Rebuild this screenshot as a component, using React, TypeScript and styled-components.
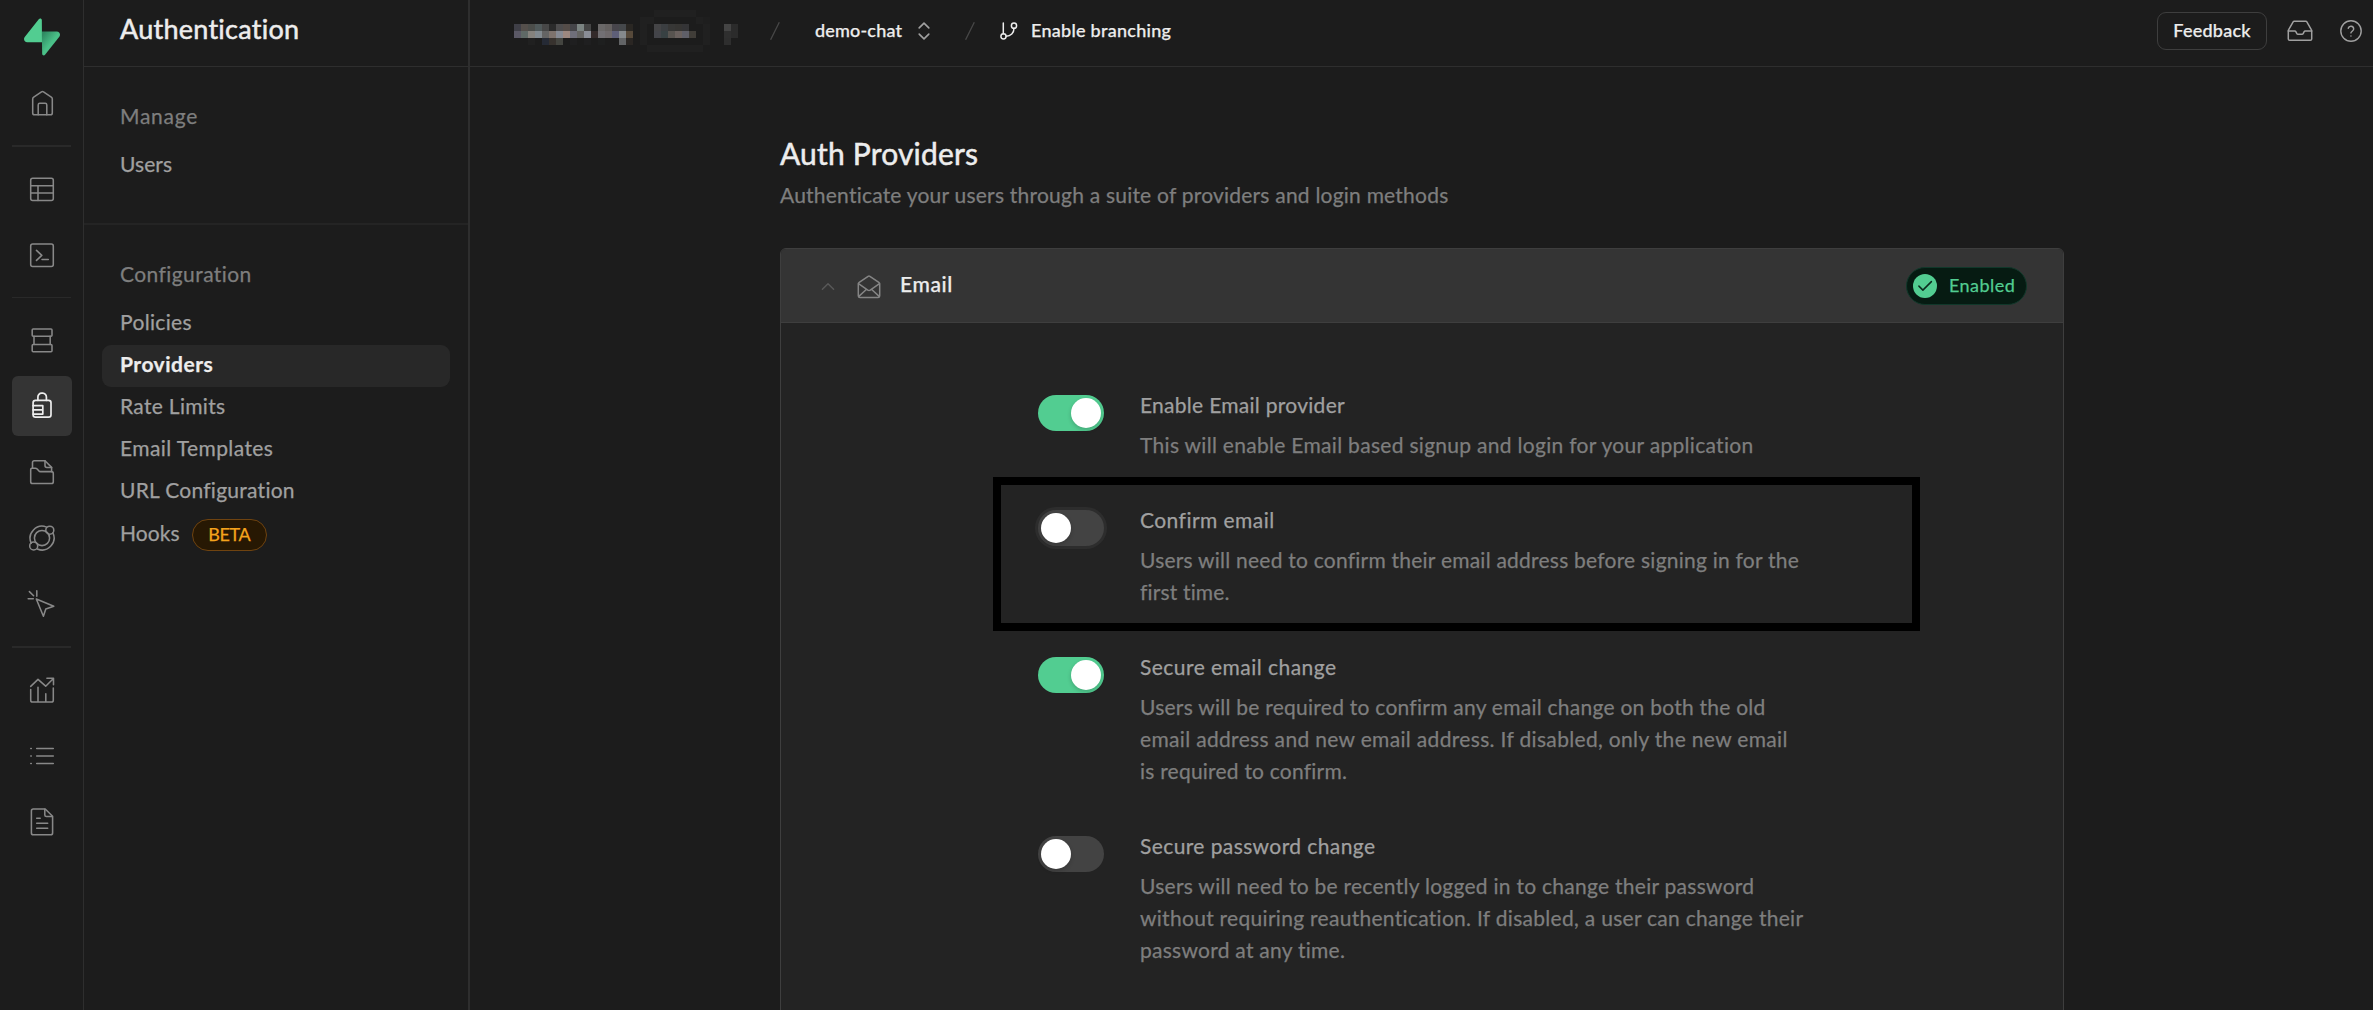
import React from 'react';
import styled, { createGlobalStyle } from 'styled-components';

const color = {
  bg: '#1c1c1c',
  surface: '#232323',
  header: '#343434',
  border: '#2e2e2e',
  borderStrong: '#3e3e3e',
  muted: '#242424',
  text: '#ededed',
  light: '#a0a0a0',
  lighter: '#7e7e7e',
  brand: '#52cd91',
};

const GlobalStyle = createGlobalStyle`
  *, *::before, *::after { box-sizing: border-box; }
  body {
    margin: 0;
    background: ${color.bg};
    color: ${color.text};
    font-family: Lato, "Open Sans", sans-serif;
    -webkit-text-stroke: 0.25px currentColor;
    overflow: hidden;
  }
  h1, h2, h3, p { margin: 0; font-weight: 400; }
  svg { display: block; flex: none; }
`;

const Shell = styled.div`
  display: grid;
  grid-template-columns: 84px 386px 1fr;
  height: 1010px;
`;

/* ---------- icon rail ---------- */

const Rail = styled.nav`
  display: flex;
  flex-direction: column;
  align-items: flex-start;
  gap: 6px;
  padding: 18px 11px 0 12px;
  border-right: 1px solid ${color.border};
`;

const LogoSlot = styled.div`
  padding: 0 0 11px 12px;
`;

const RailButton = styled.div<{ $active?: boolean }>`
  display: flex;
  align-items: center;
  justify-content: center;
  flex: none;
  width: 60px;
  height: 60px;
  border-radius: 6px;
  color: ${(p) => (p.$active ? color.text : '#888888')};
  background: ${(p) => (p.$active ? '#343434' : 'transparent')};
`;

const RailDivider = styled.div<{ $thin?: boolean }>`
  flex: none;
  width: 59px;
  height: ${(p) => (p.$thin ? 1 : 2)}px;
  margin: 6px 0;
  background: #292929;
`;

/* ---------- section menu ---------- */

const Menu = styled.aside`
  border-right: 2px solid ${color.border};
`;

const MenuTitle = styled.h1`
  height: 67px;
  padding-left: 36px;
  border-bottom: 1px solid ${color.border};
  font-size: 27px;
  line-height: 57px;
  letter-spacing: 0.26px;
  -webkit-text-stroke-width: 0.5px;
`;

const MenuSection = styled.section<{ $last?: boolean }>`
  padding: 33px 18px 36px;
  border-bottom: ${(p) => (p.$last ? 0 : 2)}px solid ${color.muted};
`;

const MenuHeading = styled.h2<{ $track: number }>`
  margin: 0 0 13px;
  padding-left: 18px;
  font-size: 21px;
  line-height: 32px;
  letter-spacing: ${(p) => p.$track}px;
  color: ${color.lighter};
`;

const MenuItem = styled.div<{ $track: number; $active?: boolean; $tagged?: boolean }>`
  display: flex;
  align-items: center;
  height: ${(p) => (p.$tagged ? 44 : 42)}px;
  padding: 0 18px;
  border-radius: 9px;
  font-size: 21px;
  letter-spacing: ${(p) => p.$track}px;
  font-weight: ${(p) => (p.$active ? 700 : 400)};
  color: ${(p) => (p.$active ? color.text : color.light)};
  background: ${(p) => (p.$active ? '#282828' : 'transparent')};
`;

const MenuLabel = styled.span`
  padding-bottom: 4px;
  line-height: 38px;
`;

const BetaTag = styled.span`
  width: 75px;
  height: 32px;
  margin-left: 12px;
  border: 1px solid #6f4310;
  border-radius: 16px;
  background: #271803;
  color: #f5a31c;
  font-size: 18px;
  line-height: 29px;
  letter-spacing: -0.4px;
  text-align: center;
`;

/* ---------- top bar ---------- */

const Main = styled.main`
  min-width: 0;
`;

const TopBar = styled.header`
  display: flex;
  align-items: center;
  height: 67px;
  padding: 0 11px 5px 44px;
  border-bottom: 1px solid ${color.border};
`;

const OrgMosaic = styled.svg`
  margin-right: 46px;
`;

const Crumb = styled.span<{ $track: number }>`
  padding-bottom: 1px;
  font-size: 18px;
  line-height: 28px;
  font-weight: 500;
  letter-spacing: ${(p) => p.$track}px;
`;

const ProjectCrumb = styled.div`
  display: flex;
  align-items: center;
  gap: 16px;
  width: 150px;
  margin-left: 35px;
`;

const BranchCrumb = styled.div`
  display: flex;
  align-items: center;
  gap: 13px;
  margin-left: 25px;
`;

const Actions = styled.div`
  display: flex;
  align-items: center;
  margin-left: auto;
`;

const FeedbackButton = styled.button`
  width: 110px;
  height: 38px;
  margin-right: 20px;
  padding: 0 0 2px;
  border: 1px solid ${color.borderStrong};
  border-radius: 9px;
  background: transparent;
  color: ${color.text};
  font: 500 18px/30px Lato, sans-serif;
  letter-spacing: 0.24px;
`;

/* ---------- content ---------- */

const Content = styled.div`
  width: 1284px;
  margin: 0 0 0 310px;
  padding-top: 66px;
`;

const PageTitle = styled.h2`
  font-size: 30px;
  line-height: 40px;
  letter-spacing: 0.18px;
  -webkit-text-stroke-width: 0.5px;
`;

const PageSubtitle = styled.p`
  margin-top: 6px;
  font-size: 21px;
  line-height: 32px;
  letter-spacing: 0.22px;
  color: ${color.lighter};
`;

const Card = styled.section`
  height: 800px;
  margin-top: 37px;
  border: 1px solid ${color.borderStrong};
  border-radius: 6px;
  background: ${color.surface};
  overflow: hidden;
`;

const CardHeader = styled.div`
  display: flex;
  align-items: center;
  height: 74px;
  padding: 0 36px 0 40px;
  border-bottom: 1px solid ${color.borderStrong};
  background: ${color.header};
`;

const CardTitle = styled.h3`
  margin-left: 19px;
  padding-bottom: 4px;
  font-size: 21px;
  line-height: 32px;
  font-weight: 500;
  letter-spacing: 0.6px;
`;

const MailSlot = styled.span`
  margin: 3px 0 0 22px;
`;

const ChevronSlot = styled.span`
  margin-top: 2px;
`;

const StatusPill = styled.div`
  display: flex;
  align-items: center;
  width: 121px;
  height: 38px;
  margin-left: auto;
  padding-left: 6px;
  border: 1px solid #10382a;
  border-radius: 19px;
  background: #061b12;
  color: ${color.brand};
  font-size: 18px;
  line-height: 32px;
  letter-spacing: 0.45px;
`;

const StatusText = styled.span`
  padding: 0 0 1px 12px;
`;

const Settings = styled.div`
  display: flex;
  flex-direction: column;
  gap: 43px;
  padding: 66px 0 0 257px;
`;

const Setting = styled.div`
  position: relative;
  display: grid;
  grid-template-columns: 66px 1fr;
  column-gap: 36px;
  align-items: start;
`;

const Switch = styled.div<{ $on?: boolean; $focused?: boolean }>`
  display: flex;
  justify-content: ${(p) => (p.$on ? 'flex-end' : 'flex-start')};
  height: 36px;
  margin-top: 6px;
  padding: 3px;
  border-radius: 18px;
  background: ${(p) => (p.$on ? color.brand : '#434343')};
  box-shadow: ${(p) => (p.$focused ? '0 0 0 3px #2d2d2d' : 'none')};
`;

const Knob = styled.span`
  width: 30px;
  height: 30px;
  border-radius: 50%;
  background: #fff;
  box-shadow: 0 2px 4px rgba(0, 0, 0, 0.18);
`;

const SettingText = styled.div`
  font-size: 21px;
  line-height: 32px;
`;

const SettingTitle = styled.h3<{ $track: number }>`
  margin-bottom: 8px;
  font-size: 21px;
  letter-spacing: ${(p) => p.$track}px;
  color: ${color.light};
`;

const SettingLine = styled.span<{ $track: number }>`
  display: block;
  white-space: nowrap;
  letter-spacing: ${(p) => p.$track}px;
  color: ${color.lighter};
`;

/* Annotation frame drawn over the card, wider and taller than its row. */
const Highlight = styled.div`
  position: absolute;
  left: -45px;
  top: -27px;
  width: 927px;
  height: 154px;
  border: 8px solid #000;
`;

/* ---------- drawings ---------- */

const Logo = () => (
  <svg width="36" height="38" viewBox="0 0 109 113" fill="none">
    <defs>
      <linearGradient id="bolt" x1="56" y1="50" x2="84" y2="72" gradientUnits="userSpaceOnUse">
        <stop stopColor="#2f8a62" />
        <stop offset="1" stopColor="#4ac088" />
      </linearGradient>
    </defs>
    <path d="M63.7 110.3c-2.9 3.6-8.6 1.6-8.7-3L54 40h45.200c8.200 0 12.700 9.500 7.700 15.900L63.700 110.300z" fill="url(#bolt)" />
    <path d="M45.300 2.100c2.900-3.600 8.700-1.600 8.700 3l.5 67.200H9.800c-8.200 0-12.700-9.500-7.600-15.900L45.300 2.100z" fill={color.brand} />
  </svg>
);

const RailSvg: React.FC<{ children: React.ReactNode; width?: number }> = ({ children, width = 1.55 }) => (
  <svg
    width="30"
    height="30"
    viewBox="0 0 30 30"
    fill="none"
    stroke="currentColor"
    strokeWidth={width}
    strokeLinecap="round"
    strokeLinejoin="round"
  >
    {children}
  </svg>
);

const HomeIcon = () => (
  <RailSvg>
    <g transform="translate(0.4 0.5)">
      <path d="M5.300 10.400c0-.8.400-1.400 1-1.800l7.800-5.200c.8-.5 1.200-.5 2 0l7.800 5.200c.6.400 1 1 1 1.800v14c0 1-.8 1.800-1.800 1.800h-16c-1 0-1.800-.8-1.800-1.800z" />
      <path d="M10.800 26.200V16.400c0-.9.700-1.600 1.600-1.600h5.400c.9 0 1.600.7 1.600 1.600v9.800" />
    </g>
  </RailSvg>
);

const TableIcon = () => (
  <RailSvg>
    <rect x="3.700" y="4.200" width="22.600" height="22.300" rx="2" />
    <path d="M3.700 11.700h22.600M3.700 19h22.600M11 11.700v14.800" />
  </RailSvg>
);

const SqlIcon = () => (
  <RailSvg>
    <rect x="3.700" y="3.900" width="22.600" height="22.600" rx="2" />
    <path d="M9.500 10.400l5.300 5-5.300 5M15 19.400h6.300" />
  </RailSvg>
);

const DatabaseIcon = () => (
  <RailSvg>
    <rect x="5.200" y="4" width="19.800" height="7.200" rx="1" />
    <rect x="5.200" y="19.500" width="19.800" height="7.200" rx="1" />
    <path d="M7 11.200v8.300M23.200 11.200v8.300" />
  </RailSvg>
);

const AuthIcon = () => (
  <RailSvg width={1.7}>
    <rect x="6.100" y="9.300" width="17.900" height="16.900" rx="2.400" />
    <path d="M10.900 9.300V6a3.700 3.700 0 0 1 3.700-3.800h1.200A3.700 3.700 0 0 1 19.400 6v3.300" />
    <path d="M6.100 14.700h9.700v8.400H6.100M6.100 18.900h9" />
  </RailSvg>
);

const StorageIcon = () => (
  <RailSvg>
    <path d="M5.500 11.200V5.500c0-.9.700-1.700 1.700-1.700h10.800l6.600 6.600v4.200" />
    <path d="M18 3.800v4.800c0 1 .8 1.800 1.800 1.800h4.800" />
    <path d="M3.700 12.500c0-.8.600-1.300 1.300-1.300h3.300c.8 0 1.400.3 1.900.8l1.500 1.700c.5.600 1 .9 1.800.9h11c1 0 1.800.8 1.800 1.800v8.300c0 1-.8 1.800-1.800 1.800h-19c-1 0-1.800-.8-1.800-1.800z" />
  </RailSvg>
);

const EdgeIcon = () => (
  <RailSvg>
    <circle cx="15" cy="15" r="7.600" />
    <path d="M19.600 4.100A12 12 0 0 0 4.200 20.200M10.300 26A12 12 0 0 0 25.900 9.900" />
    <circle cx="22.800" cy="7.200" r="4" />
    <circle cx="6.700" cy="22.900" r="4" />
  </RailSvg>
);

const RealtimeIcon = () => (
  <RailSvg>
    <path d="M9.300 10l17.500 7.200-8 2.700-2.400 7.400z" />
    <path d="M9.800 7.300V1.800M6.300 9.700H1.200M6.600 6.700L2.400 2.600" />
  </RailSvg>
);

const ReportsIcon = () => (
  <RailSvg>
    <path d="M3.700 11.400L11 4.400l7.700 6.800 7-7M19.900 3.300h6.600v6.500" />
    <path d="M3.700 14.500v10.700c0 1 .8 1.800 1.800 1.800h19c1 0 1.800-.8 1.800-1.800V13M11 12.200V27M18.800 18.700V27" />
  </RailSvg>
);

const LogsIcon = () => (
  <RailSvg>
    <path d="M9.700 7.500h16.600M9.700 15h16.600M9.700 22.500h16.600M3.800 7.500h.5M3.800 15h.5M3.800 22.500h.5" />
  </RailSvg>
);

const DocsIcon = () => (
  <RailSvg>
    <path d="M18.200 2H6.300c-1 0-1.900.8-1.900 1.900v22c0 1.100.9 1.900 1.900 1.900h17.400c1 0 1.900-.8 1.900-1.900V9.300z" />
    <path d="M17.800 2.200v5.700c0 1 .8 1.600 1.600 1.600h5.800M9.700 11.200h3.500M9.700 16.200h11M9.700 21.200h11" />
  </RailSvg>
);

const Slash = () => (
  <svg width="10" height="18" viewBox="0 0 10 18" fill="none" stroke="#484848" strokeWidth="1.300">
    <path d="M9.300.3L.6 17.700" />
  </svg>
);

const UpDown = () => (
  <svg width="12" height="18" viewBox="0 0 12 18" fill="none" stroke="#a0a0a0" strokeWidth="1.600" strokeLinecap="round" strokeLinejoin="round">
    <path d="M1.200 5.900L6 1.100l4.800 4.800M1.200 12.100L6 16.900l4.800-4.800" />
  </svg>
);

const BranchIcon = () => (
  <svg width="18" height="18" viewBox="0 0 18 18" fill="none" stroke={color.text} strokeWidth="1.500" strokeLinecap="round">
    <path d="M3.300 1v10.800M14 6.300c0 4.500-3.300 7.900-7.800 7.900" />
    <circle cx="14" cy="3.700" r="2.600" />
    <circle cx="3.500" cy="14.300" r="2.600" />
  </svg>
);

const InboxIcon = () => (
  <svg width="26" height="22" viewBox="0 0 26 22" fill="none" stroke="#a0a0a0" strokeWidth="1.500" strokeLinecap="round" strokeLinejoin="round">
    <path d="M1.300 10.900h6.400c.7 0 1 .4 1.300 1l.7 1.500c.3.600.7.900 1.300.9h4c.6 0 1-.3 1.300-.9l.7-1.500c.3-.6.600-1 1.300-1h6.400" />
    <path d="M6.300 1.600L1.700 9.700c-.3.500-.4.800-.4 1.300v7.900c0 .8.600 1.400 1.400 1.400h20.600c.8 0 1.400-.6 1.400-1.400V11c0-.5-.1-.8-.4-1.300l-4.600-8.100c-.2-.3-.4-.4-.8-.4H7.100c-.4 0-.6.100-.8.400z" />
  </svg>
);

const HelpSlot = styled.span`
  margin: 1px 0 0 27px;
`;

const HelpIcon = () => (
  <svg width="22" height="22" viewBox="0 0 22 22" fill="none" stroke="#a0a0a0" strokeWidth="1.400" strokeLinecap="round" strokeLinejoin="round">
    <circle cx="11" cy="11" r="10.200" />
    <path d="M8.200 8.300a2.800 2.800 0 0 1 5.500.7c0 1.900-2.800 2.400-2.800 3.900M10.900 16h.1" />
  </svg>
);

const ChevronUp = () => (
  <svg width="14" height="9" viewBox="0 0 14 9" fill="none" stroke="#585858" strokeWidth="1.500" strokeLinecap="round" strokeLinejoin="round">
    <path d="M1.400 7.300L7 1.700l5.600 5.600" />
  </svg>
);

const MailIcon = () => (
  <svg width="24" height="24" viewBox="0 0 24 24" fill="none" stroke="#858585" strokeWidth="1.500" strokeLinecap="round" strokeLinejoin="round">
    <path d="M1.300 9c0-.7.300-1.200.9-1.600l8.900-6c.6-.4 1.200-.4 1.800 0l8.900 6c.6.400.9.900.9 1.600v11.600c0 1-.8 1.800-1.800 1.800H3.100c-1 0-1.800-.8-1.800-1.800z" />
    <path d="M1.500 8.700l9.300 6.500c.8.500 1.600.5 2.400 0l9.300-6.500M1.800 21.400l7.500-6.900M22.200 21.400l-7.500-6.900" />
  </svg>
);

const CheckBadge = () => (
  <svg width="24" height="24" viewBox="0 0 24 24" fill="none">
    <circle cx="12" cy="12" r="12" fill={color.brand} />
    <path d="M5.900 12.100l4 4 8.500-8.500" stroke="#0b2a1d" strokeWidth="1.500" strokeLinecap="round" strokeLinejoin="round" />
  </svg>
);

/* Redacted organisation name: [column, row, fill] on a 7px grid. */
const MOSAIC: [number, number, string][] = [
  [0, 2, '#3f3f47'], [1, 2, '#544f4b'], [2, 2, '#4b4d4a'], [3, 2, '#50595a'], [4, 2, '#474747'],
  [5, 2, '#2b2b2b'], [6, 2, '#4d4c4d'], [7, 2, '#544c48'], [8, 2, '#454549'], [9, 2, '#7b8482'],
  [10, 2, '#454545'], [12, 2, '#6a6868'], [13, 2, '#656160'], [14, 2, '#47454b'], [15, 2, '#45484b'],
  [16, 2, '#2a2723'],
  [0, 3, '#5a5865'], [1, 3, '#5f6966'], [2, 3, '#85827d'], [3, 3, '#81898f'], [4, 3, '#646464'],
  [5, 3, '#7e736d'], [6, 3, '#868a93'], [7, 3, '#9c8880'], [8, 3, '#6f6f7a'], [9, 3, '#656563'],
  [10, 3, '#8a8e97'], [11, 3, '#332a2a'], [12, 3, '#727074'], [13, 3, '#6f6a6c'], [14, 3, '#5e5f78'],
  [15, 3, '#85898c'], [16, 3, '#56493a'],
  [2, 4, '#202020'], [4, 4, '#252a35'], [5, 4, '#37322e'], [6, 4, '#444540'], [8, 4, '#1f1f20'],
  [10, 4, '#1f1f20'], [12, 4, '#1e1f1f'], [15, 4, '#626466'], [16, 4, '#2a2623'],
  [20, 2, '#444446'], [21, 2, '#3b3e41'], [22, 2, '#373736'], [23, 2, '#363533'], [24, 2, '#343436'],
  [20, 3, '#434449'], [21, 3, '#384143'], [22, 3, '#585450'], [23, 3, '#6a615e'], [24, 3, '#5f5f68'],
  [25, 3, '#403d38'],
  [20, 0, '#202020'], [21, 0, '#202020'], [22, 0, '#202020'], [23, 0, '#202020'], [24, 0, '#202020'],
  [25, 0, '#202020'], [18, 1, '#202020'], [19, 1, '#202020'], [26, 1, '#202020'], [18, 2, '#202020'],
  [18, 3, '#202020'], [18, 4, '#202020'], [27, 2, '#202020'], [27, 3, '#202020'], [27, 4, '#202020'],
  [19, 5, '#202020'], [20, 5, '#202020'], [21, 5, '#202020'], [22, 5, '#202020'], [23, 5, '#202020'],
  [24, 5, '#202020'], [25, 5, '#202020'], [26, 5, '#202020'], [27, 1, '#1e1e1e'],
  [30, 2, '#444444'], [31, 2, '#2b2b2b'], [30, 3, '#2f2f2f'], [31, 3, '#2b2b2b'], [30, 4, '#2e2e2e'],
];

const Mosaic = () => (
  <OrgMosaic width="210" height="42" viewBox="0 0 210 42" overflow="visible" shapeRendering="crispEdges">
    {MOSAIC.map(([c, r, fill]) => (
      <rect key={`${c}-${r}`} x={c * 7} y={r * 7} width="7" height="7" fill={fill} />
    ))}
  </OrgMosaic>
);

/* ---------- data ---------- */

const CONFIG_ITEMS = [
  { label: 'Policies', track: 0.34 },
  { label: 'Providers', track: 0.51, active: true },
  { label: 'Rate Limits', track: 0.31 },
  { label: 'Email Templates', track: 0.41 },
  { label: 'URL Configuration', track: 0.26 },
  { label: 'Hooks', track: 0.08, beta: true },
];

type Line = { text: string; track: number };
const SETTINGS: { title: Line; lines: Line[]; on?: boolean; focused?: boolean }[] = [
  {
    title: { text: 'Enable Email provider', track: 0.28 },
    lines: [{ text: 'This will enable Email based signup and login for your application', track: 0.3 }],
    on: true,
  },
  {
    title: { text: 'Confirm email', track: 0.45 },
    lines: [
      { text: 'Users will need to confirm their email address before signing in for the', track: 0.23 },
      { text: 'first time.', track: 0.16 },
    ],
    focused: true,
  },
  {
    title: { text: 'Secure email change', track: 0.46 },
    lines: [
      { text: 'Users will be required to confirm any email change on both the old', track: 0.25 },
      { text: 'email address and new email address. If disabled, only the new email', track: 0.33 },
      { text: 'is required to confirm.', track: 0.22 },
    ],
    on: true,
  },
  {
    title: { text: 'Secure password change', track: 0.4 },
    lines: [
      { text: 'Users will need to be recently logged in to change their password', track: 0.27 },
      { text: 'without requiring reauthentication. If disabled, a user can change their', track: 0.29 },
      { text: 'password at any time.', track: 0.26 },
    ],
  },
];

export default function App() {
  return (
    <>
      <GlobalStyle />
      <Shell>
        <Rail>
          <LogoSlot><Logo /></LogoSlot>
          <RailButton><HomeIcon /></RailButton>
          <RailDivider />
          <RailButton><TableIcon /></RailButton>
          <RailButton><SqlIcon /></RailButton>
          <RailDivider $thin />
          <RailButton><DatabaseIcon /></RailButton>
          <RailButton $active><AuthIcon /></RailButton>
          <RailButton><StorageIcon /></RailButton>
          <RailButton><EdgeIcon /></RailButton>
          <RailButton><RealtimeIcon /></RailButton>
          <RailDivider />
          <RailButton><ReportsIcon /></RailButton>
          <RailButton><LogsIcon /></RailButton>
          <RailButton><DocsIcon /></RailButton>
        </Rail>

        <Menu>
          <MenuTitle>Authentication</MenuTitle>
          <MenuSection>
            <MenuHeading $track={0.75}>Manage</MenuHeading>
            <MenuItem $track={0.07}><MenuLabel>Users</MenuLabel></MenuItem>
          </MenuSection>
          <MenuSection $last>
            <MenuHeading $track={0.42}>Configuration</MenuHeading>
            {CONFIG_ITEMS.map((item) => (
              <MenuItem key={item.label} $track={item.track} $active={item.active} $tagged={item.beta}>
                <MenuLabel>{item.label}</MenuLabel>
                {item.beta && <BetaTag>BETA</BetaTag>}
              </MenuItem>
            ))}
          </MenuSection>
        </Menu>

        <Main>
          <TopBar>
            <Mosaic />
            <Slash />
            <ProjectCrumb>
              <Crumb $track={0.18}>demo-chat</Crumb>
              <UpDown />
            </ProjectCrumb>
            <Slash />
            <BranchCrumb>
              <BranchIcon />
              <Crumb $track={0.27}>Enable branching</Crumb>
            </BranchCrumb>
            <Actions>
              <FeedbackButton>Feedback</FeedbackButton>
              <InboxIcon />
              <HelpSlot><HelpIcon /></HelpSlot>
            </Actions>
          </TopBar>

          <Content>
            <PageTitle>Auth Providers</PageTitle>
            <PageSubtitle>Authenticate your users through a suite of providers and login methods</PageSubtitle>
            <Card>
              <CardHeader>
                <ChevronSlot><ChevronUp /></ChevronSlot>
                <MailSlot><MailIcon /></MailSlot>
                <CardTitle>Email</CardTitle>
                <StatusPill>
                  <CheckBadge />
                  <StatusText>Enabled</StatusText>
                </StatusPill>
              </CardHeader>
              <Settings>
                {SETTINGS.map((s) => (
                  <Setting key={s.title.text}>
                    <Switch $on={s.on} $focused={s.focused}><Knob /></Switch>
                    <SettingText>
                      <SettingTitle $track={s.title.track}>{s.title.text}</SettingTitle>
                      {s.lines.map((l) => (
                        <SettingLine key={l.text} $track={l.track}>{l.text}</SettingLine>
                      ))}
                    </SettingText>
                    {s.focused && <Highlight />}
                  </Setting>
                ))}
              </Settings>
            </Card>
          </Content>
        </Main>
      </Shell>
    </>
  );
}
